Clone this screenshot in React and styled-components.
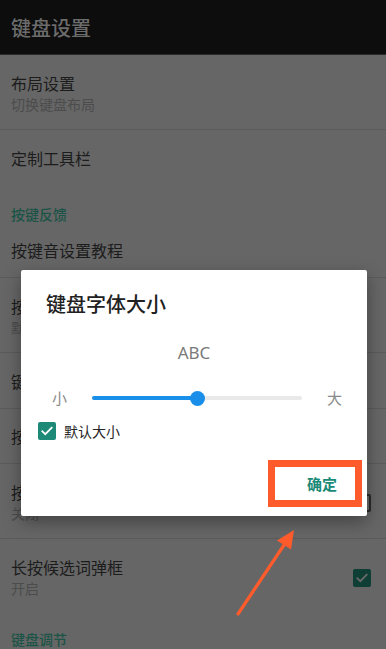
import React from "react";
import styled, { createGlobalStyle } from "styled-components";

const Global = createGlobalStyle`
  html, body { margin: 0; padding: 0; background: #666; }
  body { font-family: "Noto Sans CJK SC", "Noto Sans", sans-serif; }
  * { box-sizing: border-box; }
`;

const Screen = styled.div`
  position: relative;
  width: 386px;
  height: 649px;
  overflow: hidden;
  background: #666666;
`;

const AppBar = styled.div`
  height: 55px;
  background: #0d0d0d;
  display: flex;
  align-items: center;
  padding-left: 11px;
  border-bottom: 1px solid #2a2a2a;
`;

const AppTitle = styled.div`
  color: #6c6c6c;
  font-size: 20px;
  font-weight: 500;
  line-height: 26px;
  margin-top: 2px;
`;

const List = styled.div`
  display: flex;
  flex-direction: column;
`;

const Row = styled.div`
  display: flex;
  align-items: center;
  justify-content: space-between;
  padding: ${(p) => (p.$two ? "18px 15px 15px 11px" : "0 15px 0 11px")};
  height: ${(p) => (p.$h ? `${p.$h}px` : "auto")};
  border-bottom: ${(p) => (p.$noLine ? "none" : "1px solid #5b5b5b")};
`;

const Texts = styled.div`
  display: flex;
  flex-direction: column;
  gap: 1px;
`;

const Title = styled.div`
  color: #1c1c1c;
  font-size: 16px;
  line-height: 20px;
`;

const Sub = styled.div`
  color: #4c4c4c;
  font-size: 14px;
  line-height: 20px;
`;

const Category = styled.div`
  color: #1b5446;
  font-size: 14px;
  font-weight: 500;
  line-height: 16px;
  padding: ${(p) => p.$pad};
  height: ${(p) => p.$h}px;
`;

const Box = styled.div`
  width: 18px;
  height: 18px;
  border-radius: 2px;
  display: flex;
  align-items: center;
  justify-content: center;
  background: ${(p) => (p.$checked ? p.$bg : "transparent")};
  border: ${(p) => (p.$checked ? "none" : "2px solid #2a2a2a")};
  flex-shrink: 0;
`;

const Check = ({ color }) => (
  <svg width="14" height="14" viewBox="0 0 24 24">
    <path d="M4 12.5l5 5L20 6.5" fill="none" stroke={color} strokeWidth="3" strokeLinecap="square" />
  </svg>
);

const Dialog = styled.div`
  position: absolute;
  left: 21px;
  top: 270px;
  width: 346px;
  height: 246px;
  background: #ffffff;
  border-radius: 2px;
  box-shadow: 0 6px 18px rgba(0, 0, 0, 0.35);
  display: flex;
  flex-direction: column;
`;

const DialogTitle = styled.div`
  font-size: 20px;
  font-weight: 500;
  line-height: 28px;
  color: #212121;
  padding: 20px 0 0 25px;
`;

const Preview = styled.div`
  margin-top: 25px;
  text-align: center;
  font-family: "Noto Sans", "Open Sans", sans-serif;
  font-size: 17px;
  line-height: 20px;
  color: #7a7a7a;
`;

const SliderRow = styled.div`
  margin-top: 23px;
  height: 24px;
  display: flex;
  align-items: center;
  padding: 0 25px 0 31px;
`;

const SizeLabel = styled.div`
  font-size: 15px;
  color: #8a8a8a;
  width: 15px;
  line-height: 20px;
`;

const Track = styled.div`
  position: relative;
  flex: 1;
  height: 4px;
  margin: 0 25px 0 25px;
  background: #e9e9e9;
  border-radius: 2px;
`;

const Fill = styled.div`
  height: 100%;
  background: #1a8fe9;
  border-radius: 2px;
`;

const Thumb = styled.div`
  position: absolute;
  top: 50%;
  width: 15px;
  height: 15px;
  margin: -7.5px 0 0 -7.5px;
  border-radius: 50%;
  background: #1a8fe9;
`;

const CheckRow = styled.label`
  margin-top: 10px;
  display: flex;
  align-items: center;
  gap: 8px;
  padding-left: 17px;
  height: 22px;
`;

const CheckLabel = styled.span`
  font-size: 14px;
  color: #262626;
  line-height: 20px;
`;

const Footer = styled.div`
  position: relative;
  margin-top: 22px;
  display: flex;
  justify-content: flex-end;
  padding-right: 30px;
  height: 40px;
  align-items: center;
`;

const Button = styled.button`
  border: none;
  background: transparent;
  padding: 0;
  font-family: inherit;
  font-size: 15px;
  font-weight: 700;
  color: #1b8a78;
  line-height: 20px;
  letter-spacing: 0;
`;

const Highlight = styled.div`
  position: absolute;
  left: 247px;
  top: -4px;
  width: 94px;
  height: 47px;
  border: 7px solid #fd5b2c;
  pointer-events: none;
`;

const Annotation = styled.svg`
  position: absolute;
  left: 0;
  top: 0;
  pointer-events: none;
`;

const pct = 0.5;

export default function App() {
  return (
    <Screen>
      <Global />
      <AppBar>
        <AppTitle>键盘设置</AppTitle>
      </AppBar>
      <List>
        <Row $two>
          <Texts>
            <Title>布局设置</Title>
            <Sub>切换键盘布局</Sub>
          </Texts>
        </Row>
        <Row $h={56} $noLine>
          <Title>定制工具栏</Title>
        </Row>
        <Category $pad="20px 11px 0" $h={37}>按键反馈</Category>
        <Row $h={55}>
          <Title>按键音设置教程</Title>
        </Row>
        <Row $two>
          <Texts>
            <Title>按键音量</Title>
            <Sub>默认</Sub>
          </Texts>
        </Row>
        <Row $h={56}>
          <Title>键盘字体大小</Title>
        </Row>
        <Row $h={55}>
          <Title>按键振动</Title>
        </Row>
        <Row $two>
          <Texts>
            <Title>按键气泡</Title>
            <Sub>关闭</Sub>
          </Texts>
          <Box />
        </Row>
        <Row $two $noLine>
          <Texts>
            <Title>长按候选词弹框</Title>
            <Sub>开启</Sub>
          </Texts>
          <Box $checked $bg="#0f3e34">
            <Check color="#6a6a6a" />
          </Box>
        </Row>
        <Category $pad="18px 11px 0" $h={40}>键盘调节</Category>
      </List>

      <Dialog>
        <DialogTitle>键盘字体大小</DialogTitle>
        <Preview>ABC</Preview>
        <SliderRow>
          <SizeLabel>小</SizeLabel>
          <Track>
            <Fill style={{ width: `${pct * 100}%` }} />
            <Thumb style={{ left: `${pct * 100}%` }} />
          </Track>
          <SizeLabel>大</SizeLabel>
        </SliderRow>
        <CheckRow>
          <Box $checked $bg="#1d8a78">
            <Check color="#ffffff" />
          </Box>
          <CheckLabel>默认大小</CheckLabel>
        </CheckRow>
        <Footer>
          <Button>确定</Button>
          <Highlight />
        </Footer>
      </Dialog>

      <Annotation width="386" height="649" viewBox="0 0 386 649">
        <line x1="238" y1="614" x2="286" y2="542" stroke="#fd5b2c" strokeWidth="3.2" strokeLinecap="round" />
        <polygon points="294,530 277,540.6 291,549.5" fill="#fd5b2c" />
      </Annotation>
    </Screen>
  );
}
